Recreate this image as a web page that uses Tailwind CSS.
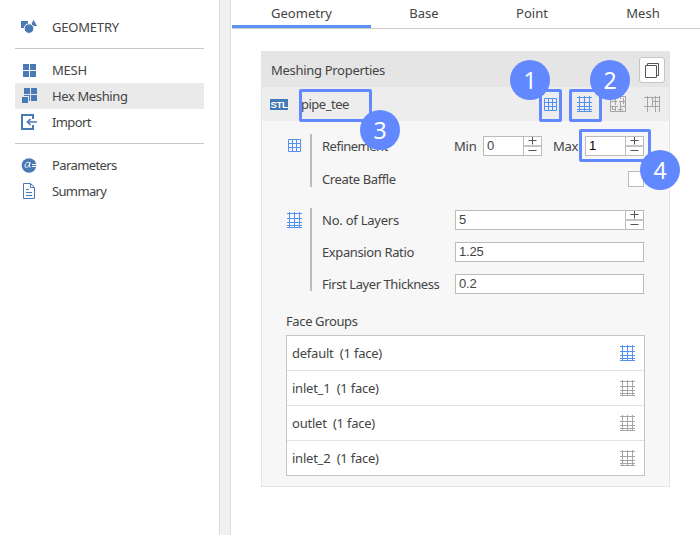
<!DOCTYPE html>
<html lang="en">
<head>
<meta charset="utf-8">
<title>Meshing</title>
<script src="https://cdn.jsdelivr.net/npm/@tailwindcss/browser@4"></script>
</head>
<body class="w-[700px] h-[535px] overflow-hidden bg-white font-['Noto_Sans',sans-serif] text-[13px] leading-[18px] text-[#444]">
<svg width="0" height="0" class="absolute">
  <defs>
    <symbol id="grid" viewBox="0 0 13 13"><path fill="none" stroke="currentColor" d="M.5 .5h12v12h-12zM4.5 0v13M8.5 0v13M0 4.5h13M0 8.5h13"/></symbol>
    <symbol id="layers" viewBox="0 0 15 16"><path fill="none" stroke="currentColor" d="M2.5 0v16M7.5 0v16M12.5 0v16M0 1.5h15M0 6.5h15M0 10.5h15M0 13.5h15M0 15.5h15"/></symbol>
    <symbol id="baffle" viewBox="0 0 16 16"><path fill="none" stroke="currentColor" d="M.5 .5h15v15h-15zM5.5 0v9M5.5 11v5M10.5 0v3M10.5 5v11M2.5 10v4M13.5 2v6M0 5.5h7M9 5.5h7M0 10.5h8M10 10.5h6M2 13.5h4M8 13.5h5"/></symbol>
    <symbol id="corner" viewBox="0 0 16 16"><path fill="none" stroke="currentColor" d="M3.500 0v16M8.500 1v9M11.500 0v16M15.500 0v16M0 1.500h16M8 5.500h8M0 10.500h16"/></symbol>
    <symbol id="spin" viewBox="0 0 18 18"><path d="M.5 0v18" stroke="#bbb"/><path d="M0 9h18" stroke="#c4c4c4" stroke-width="2"/><path d="M5.500 3.500h8M9.500 0v7.500M5.500 13.500h8" stroke="#555"/></symbol>
  </defs>
</svg>
<div class="relative flex h-[535px]">
  <nav class="w-[219px] pl-[15px] pt-[14px] shrink-0">
    <div class="w-[189px]">
      <div class="h-[26px] flex items-center pl-[6px] tracking-[-0.2px]"><svg class="mr-[15px]" width="16" height="16" viewBox="0 0 16 16" fill="#4a7ab5"><path d="M0 2h7v7H0zM12.500 .8l3.500 6.200H9.500z"/><circle cx="8" cy="9.600" r="4.800" stroke="#fff"/></svg>GEOMETRY</div>
      <div class="mt-2 border-t border-[#c8c8c8]"></div>
      <div class="mt-2 h-[26px] flex items-center pl-[6px] tracking-[-0.2px]"><svg class="mr-[15px]" width="16" height="16" viewBox="0 0 16 16" fill="#4a7ab5"><path d="M2 2h6v6H2zM9 2h6v6H9zM2 9h6v6H2zM9 9h6v6H9z"/></svg>MESH</div>
      <div class="h-[26px] flex items-center pl-[6px] bg-[#eaeaea] tracking-[-0.38px]"><svg class="mr-[15px]" width="16" height="16" viewBox="0 0 16 16" fill="#4a7ab5"><path d="M3 0h6v6H3zM10 0h6v6h-6zM10 7h6v6h-6zM3 7h6v6H8V8H3zM1 9h6v6H1z"/></svg>Hex Meshing</div>
      <div class="h-[26px] flex items-center pl-[6px] tracking-[-0.6px]"><svg class="mr-[15px]" width="16" height="16" viewBox="0 0 16 16" fill="none" stroke="#4a7ab5" stroke-width="2"><path d="M12 5V1H1v14h11v-4"/><path d="M7 8h9" stroke-width="1.500"/><path d="M9.500 5L6.500 8l3 3" stroke-width="1.700"/></svg>Import</div>
      <div class="mt-[8px] border-t border-[#c8c8c8]"></div>
      <div class="mt-[8px] h-[26px] flex items-center pl-[6px] tracking-[-0.6px]"><svg class="mr-[15px]" width="16" height="16" viewBox="0 0 16 16"><circle cx="8" cy="8.500" r="7.300" fill="#4a7ab5"/><path d="M8.500 5.500c-2-1-4.500 1-4.500 3.500 0 2.500 3 1.500 4.200-1l.8-2.500-.8 3.500c-.2 1.200.8 1.500 1.600.8" fill="none" stroke="#fff"/><path d="M11 7.500h5M11 9.500h5" stroke="#fff"/></svg>Parameters</div>
      <div class="h-[26px] flex items-center pl-[6px] tracking-[-0.65px]"><svg class="mr-[15px]" width="16" height="16" viewBox="0 0 16 16" fill="none" stroke="#4a7ab5"><path d="M2.500 .5h7l4 4v11h-11zM9.500 .5v4h4M5 6.500h3M5 9.500h6M5 12.500h6"/></svg>Summary</div>
    </div>
  </nav>
  <div class="w-3 shrink-0 bg-[#f0f0f0] border-x border-[#ddd]"></div>
  <main class="flex-1 pl-px">
    <div class="flex h-[29px] border-b border-[#ccc] text-center leading-[27px]">
      <div class="w-[139px] h-[28px] border-b-[3px] border-[#5b91f0]">Geometry</div>
      <div class="w-[106px]">Base</div><div class="w-[110px]">Point</div><div class="w-[112px]">Mesh</div>
    </div>
    <section class="mt-[22px] ml-[29px] w-[409px] h-[436px] border border-[#e4e4e4] bg-[#f7f7f7] tracking-[-0.38px]">
      <div class="h-[35px] bg-[#e5e5e5] flex items-center justify-between pl-[9px] pr-[4px] tracking-[-0.3px]">Meshing Properties
        <div class="size-[26px] rounded-[3px] border border-[#c4c4c4] bg-white grid place-items-center"><svg width="16" height="16" viewBox="0 0 16 16" fill="none" stroke="#555"><path d="M1.500 3.500h11v12h-11zM3.500 3V1.500h11v12H13"/></svg></div>
      </div>
      <div class="h-[34px] bg-[#ededed] flex items-center pl-2 text-[#a5a5a5]">
        <div class="w-[18px] h-[11px] bg-[#4279b7] text-white font-['Liberation_Sans',sans-serif] font-bold text-[9.5px] leading-[11px] text-center">STL</div>
        <div class="ml-[13px] w-[243px] text-[#444] tracking-[-0.5px]">pipe_tee</div>
        <svg class="text-[#5590ee]" width="13" height="13"><use href="#grid"/></svg>
        <svg class="ml-[20px] text-[#5590ee]" width="15" height="16"><use href="#layers"/></svg>
        <svg class="ml-[18px]" width="16" height="16"><use href="#baffle"/></svg>
        <svg class="ml-[18px]" width="16" height="16"><use href="#corner"/></svg>
      </div>
      <div class="mt-[13px] flex h-[53px]">
        <div class="w-[48px] pl-[26px] pt-[5px] text-[#5590ee]"><svg width="13" height="13"><use href="#grid"/></svg></div>
        <div class="w-[334px] border-l-2 border-[#bbb] pl-[10px]">
          <div class="flex items-center h-[20px] mt-[2px]"><span class="w-[132px] tracking-[-0.5px]">Refinement</span><span class="w-[29px] tracking-[-0.2px]">Min</span>
            <div class="w-[59px] h-5 border border-[#bbb] bg-white flex pl-[3px] font-['Liberation_Sans',sans-serif] tracking-normal"><span class="flex-1">0</span><svg width="18" height="18"><use href="#spin"/></svg></div>
            <span class="w-[32px] ml-[11px] tracking-[-0.3px]">Max</span>
            <div class="w-[59px] h-5 border border-[#bbb] bg-white flex pl-[3px] text-black font-['Liberation_Sans',sans-serif] tracking-normal"><span class="flex-1">1</span><svg width="18" height="18"><use href="#spin"/></svg></div>
          </div>
          <div class="mt-[15px] h-4 flex items-center justify-between">Create Baffle<div class="size-4 border border-[#bbb] bg-white"></div></div>
        </div>
      </div>
      <div class="mt-[21px] flex h-[83px]">
        <div class="w-[48px] pl-[25px] pt-1 text-[#5590ee]"><svg width="15" height="16"><use href="#layers"/></svg></div>
        <div class="w-[334px] border-l-2 border-[#bbb] pl-[10px] pt-[2px]">
          <div class="flex h-5 items-center"><span class="w-[133px] tracking-[-0.23px]">No. of Layers</span><div class="w-[189px] h-5 border border-[#bbb] bg-white flex pl-[3px] font-['Liberation_Sans',sans-serif] tracking-normal"><span class="flex-1">5</span><svg width="18" height="18"><use href="#spin"/></svg></div></div>
          <div class="mt-3 flex h-5 items-center"><span class="w-[133px]">Expansion Ratio</span><div class="w-[189px] h-5 border border-[#bbb] bg-white pl-[3px] font-['Liberation_Sans',sans-serif] tracking-[-0.2px]">1.25</div></div>
          <div class="mt-3 flex h-5 items-center"><span class="w-[133px] whitespace-nowrap tracking-[-0.42px]">First Layer Thickness</span><div class="w-[189px] h-5 border border-[#bbb] bg-white pl-[3px] font-['Liberation_Sans',sans-serif] tracking-[-0.2px]">0.2</div></div>
        </div>
      </div>
      <div class="mt-[21px] ml-6">Face Groups</div>
      <div class="mt-[5px] ml-6 w-[359px] h-[141px] border border-[#c4c4c4] bg-white divide-y divide-[#e2e2e2] tracking-[-0.23px]">
        <div class="h-[35px] flex items-center justify-between pl-[5px] pr-[9px]"><span class="whitespace-pre">default  (1 face)</span><svg class="text-[#5590ee]" width="15" height="16"><use href="#layers"/></svg></div>
        <div class="h-[35px] flex items-center justify-between pl-[5px] pr-[9px]"><span class="whitespace-pre">inlet_1  (1 face)</span><svg class="text-[#a5a5a5]" width="15" height="16"><use href="#layers"/></svg></div>
        <div class="h-[35px] flex items-center justify-between pl-[5px] pr-[9px]"><span class="whitespace-pre">outlet  (1 face)</span><svg class="text-[#a5a5a5]" width="15" height="16"><use href="#layers"/></svg></div>
        <div class="h-[34px] flex items-center justify-between pl-[5px] pr-[9px]"><span class="whitespace-pre">inlet_2  (1 face)</span><svg class="text-[#a5a5a5]" width="15" height="16"><use href="#layers"/></svg></div>
      </div>
    </section>
  </main>
  <div class="absolute left-[538.500px] top-[88.500px] w-[23px] h-[33px] border-3 border-[#6288ff] rounded-[2px]"></div>
  <div class="absolute left-[569px] top-[88.500px] w-[33px] h-[33px] border-3 border-[#6288ff] rounded-[2px]"></div>
  <div class="absolute left-[298.500px] top-[88.500px] w-[73px] h-[33px] border-3 border-[#6288ff] rounded-[2px]"></div>
  <div class="absolute left-[579px] top-[128.500px] w-[72px] h-[33px] border-3 border-[#6288ff] rounded-[2px]"></div>
  <div class="absolute left-[510px] top-[60px] size-10 rounded-full bg-[#6288ff] text-white text-[23px] leading-[40px] text-center">1</div>
  <div class="absolute left-[590px] top-[60px] size-10 rounded-full bg-[#6288ff] text-white text-[23px] leading-[40px] text-center">2</div>
  <div class="absolute left-[360px] top-[110px] size-10 rounded-full bg-[#6288ff] text-white text-[23px] leading-[40px] text-center">3</div>
  <div class="absolute left-[640px] top-[150px] size-10 rounded-full bg-[#6288ff] text-white text-[23px] leading-[40px] text-center">4</div>
</div>
</body>
</html>
